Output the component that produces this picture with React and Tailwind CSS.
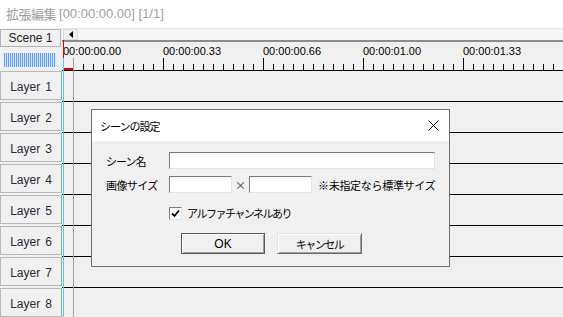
import React from "react";

const layers = [1, 2, 3, 4, 5, 6, 7, 8];
const labels = ["00:00:00.00", "00:00:00.33", "00:00:00.66", "00:00:01.00", "00:00:01.33"];
const jp = "font-['Noto_Sans_CJK_JP',sans-serif]";

const Ruler = () => {
  const ticks = [...Array(50)].map((_, k) => 11 + k * 10);
  return (
    <div className="h-[31px] border-t-2 border-b border-t-[#8c8c8c] border-b-black">
      <div className="flex h-[15px] pl-[1px] pt-[3px] text-[11px] leading-[12px] text-black">
        {labels.map((l) => (
          <span key={l} className="w-[100px] shrink-0">
            {l}
          </span>
        ))}
      </div>
      <svg width="501" height="13" className="block">
        {ticks.map((x, k) => (
          <line
            key={x}
            x1={x + 0.5}
            x2={x + 0.5}
            y1={(k + 1) % 10 === 0 ? 1 : 7}
            y2="13"
            stroke="#000"
          />
        ))}
        <rect x="1" y="11" width="10" height="2" fill="#e00000" />
      </svg>
    </div>
  );
};

const Sunken = ({ className }) => (
  <div
    className={`h-[17px] border bg-white border-t-[#7a7a7a] border-l-[#7a7a7a] border-r-[#e3e3e3] border-b-[#e3e3e3] ${className}`}
  ></div>
);

const SceneDialog = () => (
  <div className={`absolute left-[91px] top-[109px] w-[359px] h-[158px] border border-[#707070] bg-[#f0f0f0] ${jp} text-[11px] leading-[14px] text-black`}>
    {/* title bar */}
    <div className="flex h-[31px] items-center justify-between bg-white pl-[8px] pr-[10px]">
      <span className="tracking-[-1px]">シーンの設定</span>
      <svg width="11" height="11" viewBox="0 0 11 11">
        <path d="M0.5 0.5 L10.5 10.5 M10.5 0.5 L0.5 10.5" stroke="#000" strokeWidth="1" />
      </svg>
    </div>

    <div className="pl-[14px] pt-[11px]">
      <div className="flex items-center">
        <span className="w-[63px] tracking-[-1px]">シーン名</span>
        <Sunken className="w-[266px]" />
      </div>
      <div className="mt-[7px] flex items-center">
        <span className="w-[63px] tracking-[-0.6px]">画像サイズ</span>
        <Sunken className="w-[63px]" />
        <span className="w-[17px] text-center text-[#333]">×</span>
        <Sunken className="w-[63px]" />
        <span className="ml-[6px] tracking-[-0.3px]">※未指定なら標準サイズ</span>
      </div>
      <div className="mt-[13px] ml-[63px] flex items-center">
        <div className="flex h-[13px] w-[13px] items-center justify-center border bg-white border-t-[#7a7a7a] border-l-[#7a7a7a] border-r-[#e3e3e3] border-b-[#e3e3e3]">
          <svg width="9" height="9" viewBox="0 0 9 9">
            <path d="M1 4.5 L3.5 7 L8 1.5" fill="none" stroke="#000" strokeWidth="1.8" />
          </svg>
        </div>
        <span className="ml-[5px] tracking-[-1.5px]">アルファチャンネルあり</span>
      </div>
      <div className="mt-[13px] ml-[75px] flex gap-[12px]">
        <button className="flex h-[21px] w-[84px] items-center justify-center border border-[#5a5a5a] bg-[#f0f0f0] shadow-[inset_1px_1px_0_#fff,inset_-1px_-1px_0_#a0a0a0] font-['Liberation_Sans',sans-serif] text-[12px]">
          OK
        </button>
        <button className="flex h-[21px] w-[85px] items-center justify-center border border-t-[#e3e3e3] border-l-[#e3e3e3] border-r-[#696969] border-b-[#696969] bg-[#f0f0f0] shadow-[inset_1px_1px_0_#fff,inset_-1px_-1px_0_#a0a0a0] tracking-[-1.5px]">
          キャンセル
        </button>
      </div>
    </div>
  </div>
);

const App = () => {
  return (
    <div className="relative h-[317px] w-[563px] overflow-hidden bg-[#f0f0f0] font-['Liberation_Sans',sans-serif]">
      {/* title */}
      <div className="flex h-[28px] items-center bg-white pl-[6px] text-[13px] text-[#a0a0a0]">
        <span className={`${jp} tracking-[-0.5px]`}>拡張編集</span>
        <span className="ml-[3px]">[00:00:00.00] [1/1]</span>
      </div>

      <div className="flex">
        {/* left panel */}
        <div className="w-[62px] shrink-0">
          <div className="mt-[1px] flex h-[18px] w-[61px] items-center justify-center border border-[#b4b4b4] bg-[#f0f0f0] text-[12px] text-[#222]">
            Scene 1
          </div>
          <div className="ml-[4px] mt-[6px] h-[14px] w-[52px] bg-[repeating-linear-gradient(90deg,#5c9ef0_0_1px,#dbe8f8_1px_2px)]"></div>
          <div className="mt-[4px] flex flex-col gap-[2px]">
            {layers.map((n) => (
              <div
                key={n}
                className="flex h-[29px] w-[62px] items-center justify-center gap-[5px] border border-[#b8b8b8] border-r-[#a0a0a0] bg-[#f0f0f0] pt-[2px] text-[12px] text-[#2a2a3a]"
              >
                <span>Layer</span>
                <span>{n}</span>
              </div>
            ))}
          </div>
        </div>

        {/* timeline */}
        <div className="relative flex-1">
          <div className="flex h-[12px] items-start border-t border-[#e6e6e6] bg-[#f7f7f7] pl-[1px]">
            <div className="flex h-[11px] w-[15px] items-center justify-center border border-[#dcdcdc] bg-[#f0f0f0]">
              <svg width="4" height="7" viewBox="0 0 4 7">
                <path d="M4 0 L0 3.5 L4 7 Z" fill="#000" />
              </svg>
            </div>
          </div>
          <Ruler />
          {layers.map((n) => (
            <div key={n} className="h-[31px] border-b border-black"></div>
          ))}

          {/* cursor lines */}
          <div className="absolute left-[1px] top-[12px] h-[18px] w-px bg-[#e00000]"></div>
          <div className="absolute left-[1px] top-[30px] bottom-0 w-px bg-[#3fd6e6]"></div>
          <div className="absolute left-[11px] top-[30px] bottom-0 w-px bg-[#a0a0a0]"></div>
        </div>
      </div>

      <SceneDialog />
    </div>
  );
};

export default App;
